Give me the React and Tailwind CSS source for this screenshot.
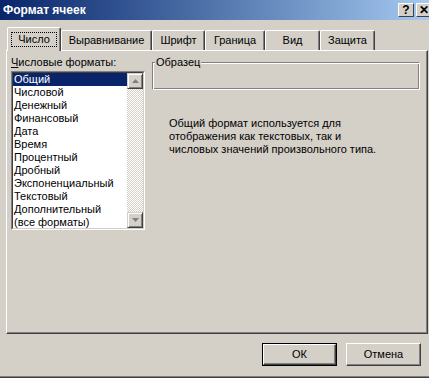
import React from 'react';

const formats = [
  'Общий',
  'Числовой',
  'Денежный',
  'Финансовый',
  'Дата',
  'Время',
  'Процентный',
  'Дробный',
  'Экспоненциальный',
  'Текстовый',
  'Дополнительный',
  '(все форматы)',
];

const tabs = [
  { label: 'Выравнивание', w: 'w-[91px]' },
  { label: 'Шрифт', w: 'w-[53px]' },
  { label: 'Граница', w: 'w-[60px]' },
  { label: 'Вид', w: 'w-[55px]' },
  { label: 'Защита', w: 'w-[55px]' },
];

function Arrow({ up }) {
  return (
    <svg width="7" height="4" viewBox="0 0 7 4" className="block">
      <path
        d={up ? 'M3.5 0L7 4H0z' : 'M0 0H7L3.5 4z'}
        fill="#808080"
      />
    </svg>
  );
}

function ScrollButton({ up }) {
  return (
    <div className="w-[16px] h-[16px] bg-[#d4d0c8] border border-t-[#d4d0c8] border-l-[#d4d0c8] border-r-[#404040] border-b-[#404040] shadow-[inset_1px_1px_0_#fff,inset_-1px_-1px_0_#808080] flex items-center justify-center">
      <Arrow up={up} />
    </div>
  );
}

function Button({ children, isDefault }) {
  return (
    <div className={`w-[75px] h-[23px] flex items-center justify-center ${isDefault ? 'border border-black' : ''}`}>
      <div className="w-full h-full bg-[#d4d0c8] border border-t-white border-l-white border-r-[#404040] border-b-[#404040] shadow-[inset_-1px_-1px_0_#808080] flex items-center justify-center text-[11px] text-black">
        {children}
      </div>
    </div>
  );
}

export default function App() {
  return (
    <div className="w-[429px] h-[378px] bg-[#d4d0c8] overflow-hidden font-['Liberation_Sans',Arial,sans-serif] text-[11px] text-black flex flex-col">
      {/* Title bar */}
      <div className="h-[20px] shrink-0 bg-gradient-to-r from-[#0a246a] to-[#a6caf0] flex items-center justify-between pl-[3px]">
        <span className="text-white font-bold text-[12px]">Формат ячеек</span>
        <div className="flex items-center gap-[2px] mr-[-3px]">
          <div className="w-[16px] h-[14px] bg-[#d4d0c8] border border-t-white border-l-white border-r-[#404040] border-b-[#404040] flex items-center justify-center font-bold text-[12px] leading-none">?</div>
          <div className="w-[16px] h-[14px] bg-[#d4d0c8] border border-t-white border-l-white border-r-[#404040] border-b-[#404040] flex items-center justify-center font-bold text-[12px] leading-none">✕</div>
        </div>
      </div>

      {/* Tabs */}
      <div className="flex items-end h-[30px] pl-[7px] shrink-0">
        <div className="relative z-10 w-[54px] h-[24px] -mb-px bg-[#d4d0c8] border-t border-l border-white border-r border-r-[#404040] rounded-t-[2px] shadow-[inset_-1px_0_0_#808080] flex items-start justify-center pt-[4px]">
          <span className="border border-dotted border-black px-[6px] leading-[13px]">Число</span>
        </div>
        {tabs.map(t => (
          <div
            key={t.label}
            className={`${t.w} h-[20px] bg-[#d4d0c8] border-t border-l border-white border-r border-r-[#404040] rounded-t-[2px] shadow-[inset_-1px_0_0_#808080] flex items-center justify-center pb-[1px]`}
          >
            {t.label}
          </div>
        ))}
      </div>

      {/* Panel */}
      <div className="ml-[6px] w-[422px] h-[284px] shrink-0 border-t border-l border-white border-r border-b border-r-[#404040] border-b-[#404040] shadow-[inset_-1px_-1px_0_#808080] flex pt-[5px] pl-[4px]">
        <div className="flex flex-col">
          <div className="leading-[13px] mb-[2px]">
            <span className="underline">Ч</span>исловые форматы:
          </div>
          <div className="w-[134px] h-[159px] border border-t-[#808080] border-l-[#808080] border-r-white border-b-white">
            <div className="w-full h-full border border-t-[#404040] border-l-[#404040] border-r-[#d4d0c8] border-b-[#d4d0c8] bg-white flex">
              <div className="flex-1 flex flex-col pt-0">
                {formats.map((f, i) => (
                  <div
                    key={f}
                    className={`h-[13px] leading-[13px] pl-[1px] whitespace-nowrap ${i === 0 ? 'bg-[#0a246a] text-white' : ''}`}
                  >
                    {f}
                  </div>
                ))}
              </div>
              <div className="w-[16px] flex flex-col bg-[repeating-conic-gradient(#d4d0c8_0_25%,#fff_0_50%)] bg-[length:2px_2px]">
                <ScrollButton up />
                <div className="flex-1" />
                <ScrollButton />
              </div>
            </div>
          </div>
        </div>

        <div className="flex flex-col ml-[7px] w-[268px]">
          <div className="relative mt-[6px] h-[28px] border border-t-[#808080] border-l-[#808080] border-r-white border-b-white shadow-[inset_1px_1px_0_#fff,inset_-1px_-1px_0_#808080]">
            <span className="absolute -top-[7px] left-[2px] bg-[#d4d0c8] px-[1px] leading-[13px]">Образец</span>
          </div>
          <div className="mt-[27px] ml-[17px] leading-[13px]">
            Общий формат используется для<br />
            отображения как текстовых, так и<br />
            числовых значений произвольного типа.
          </div>
        </div>
      </div>

      {/* Buttons */}
      <div className="flex justify-end gap-[9px] pr-[8px] pt-[9px] shrink-0">
        <Button isDefault>ОК</Button>
        <Button>Отмена</Button>
      </div>

      <div className="mt-auto h-[2px] border-t border-[#808080] border-b border-b-[#404040] shrink-0" />
    </div>
  );
}
